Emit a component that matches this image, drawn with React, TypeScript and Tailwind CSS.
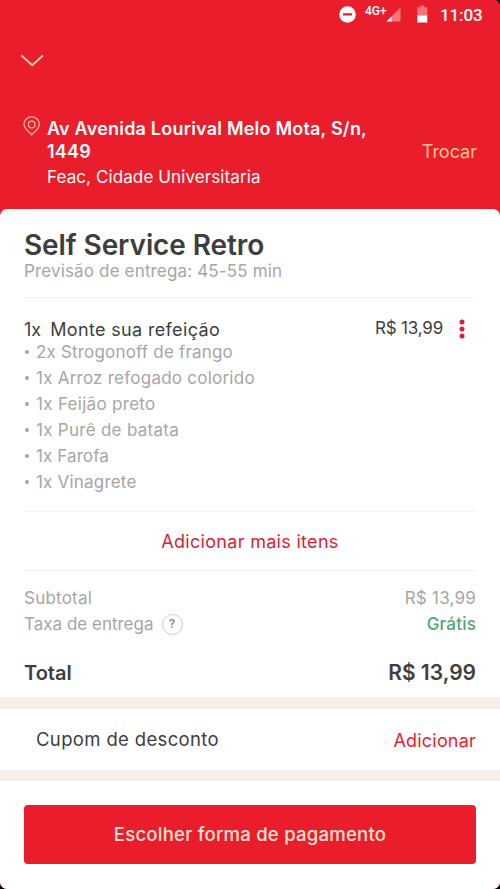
const sideItems = [
  { label: "2x Strogonoff de frango", tracking: "tracking-[0.18px]" },
  { label: "1x Arroz refogado colorido", tracking: "tracking-[0.24px]" },
  { label: "1x Feijão preto", tracking: "tracking-[0.3px]" },
  { label: "1x Purê de batata", tracking: "tracking-[0.28px]" },
  { label: "1x Farofa", tracking: "tracking-[0.1px]" },
  { label: "1x Vinagrete", tracking: "tracking-[0.2px]" },
];

function StatusBar() {
  return (
    <div className="flex h-[30px] items-center pl-[339px] text-white">
      <svg width="18" height="18" viewBox="0 0 18 18" className="shrink-0">
        <circle cx="8.500" cy="8.500" r="8.300" fill="#fff" />
        <rect x="4" y="7.300" width="9" height="2.300" rx="0.400" fill="#ea1d2c" />
      </svg>
      <span className="-mt-[9px] ml-[8px] w-[23px] shrink-0 whitespace-nowrap font-[Roboto] text-[12px] leading-none font-medium">
        4G+
      </span>
      <svg width="15" height="15" viewBox="0 0 15 15" className="-mt-px -ml-0.5 shrink-0">
        <path d="M14.500 0.500V14.500H0.500Z" fill="#f5757e" />
        <path d="M5.500 9.500V14.500H0.500Z" fill="#fff" />
      </svg>
      <svg width="11" height="18" viewBox="0 0 11 18" className="-mt-[2px] ml-[16px] shrink-0">
        <path d="M3.300 0.500H7.300V2.200H10.300V11H0.300V2.200H3.300Z" fill="#f5757e" />
        <path d="M0.300 10.500H10.300V17.500H0.300Z" fill="#fff" />
      </svg>
      <span className="ml-[12px] font-[Roboto] text-[17px] leading-none font-medium tracking-[-0.1px]">11:03</span>
    </div>
  );
}

function Header() {
  return (
    <header className="h-[209px] bg-[#ea1d2c]">
      <StatusBar />
      <svg width="24" height="13" viewBox="0 0 24 13" fill="none" className="mt-[24px] ml-[20px]">
        <path d="M1.500 1.500L12.200 11.200L23 1.500" stroke="#fbd0a4" strokeWidth="1.800" />
      </svg>
      <div className="mt-[49px] flex pr-[23px] pl-[23px]">
        <svg width="18" height="20" viewBox="0 0 18 20" fill="none" stroke="#fbc09a" strokeWidth="1.300" className="shrink-0">
          <path d="M8.700 18.700C7.500 17.400 1 13 1 8.300a7.700 7.500 0 0 1 15.400 0C16.400 13 9.900 17.400 8.700 18.700Z" />
          <circle cx="8.700" cy="8.500" r="3.300" />
        </svg>
        <div className="ml-[6px] flex-1 whitespace-nowrap text-white">
          <p className="mt-px text-[18px] leading-[23px] font-semibold tracking-[0.21px]">
            Av Avenida Lourival Melo Mota, S/n,
            <br />
            1449
          </p>
          <p className="mt-[1px] text-[17px] leading-[26px] tracking-[0.1px]">Feac, Cidade Universitaria</p>
        </div>
        <button className="mt-[24px] h-[24px] text-[18px] leading-[24px] text-[#fcc796]">Trocar</button>
      </div>
    </header>
  );
}

function Divider() {
  return <div className="h-px bg-[#f2f2f2]" />;
}

export default function App() {
  return (
    <div className="h-[889px] w-[500px] overflow-hidden bg-black font-[Inter,sans-serif]">
      <div className="h-full overflow-hidden rounded-tr-[6px] rounded-b-[7px] bg-[#ea1d2c]">
        <Header />
        <main className="h-[680px] rounded-t-[7px] bg-white">
          <section className="h-[488px] px-[24px] pt-[21px]">
            <h1 className="text-[28px] leading-[30px] font-semibold tracking-[-0.1px] whitespace-nowrap text-[#3e3e3e]">
              Self Service Retro
            </h1>
            <p className="mb-[14px] text-[17px] leading-[23px] tracking-[0.15px] text-[#a6a6a5]">
              Previsão de entrega: 45-55 min
            </p>
            <Divider />
            <div className="mt-[20px] flex h-[22px] items-center text-[#3e3e3e]">
              <span className="text-[18px]">1x</span>
              <span className="ml-[9px] flex-1 text-[18px] tracking-[0.35px]">Monte sua refeição</span>
              <span className="text-[17px] tracking-[-0.2px]">R$ 13,99</span>
              <svg width="6" height="20" viewBox="0 0 6 20" fill="#dc1c35" className="mr-[11px] ml-[16px]">
                <circle cx="3" cy="3" r="2.500" />
                <circle cx="3" cy="10" r="2.500" />
                <circle cx="3" cy="17" r="2.500" />
              </svg>
            </div>
            <ul className="-mt-px mb-[16px] text-[17px] leading-[26px] text-[#a6a6a5]">
              {sideItems.map((item) => (
                <li key={item.label} className="flex items-center">
                  <span className="mr-[7px] ml-[1px] size-[4px] rounded-full bg-[#a6a6a5]" />
                  <span className={item.tracking}>{item.label}</span>
                </li>
              ))}
            </ul>
            <Divider />
            <button className="h-[58px] w-full pt-px text-[18px] tracking-[0.3px] text-[#dc1c35]">
              Adicionar mais itens
            </button>
            <Divider />
            <div className="mt-[14px] text-[17px] leading-[26px] text-[#a6a6a5]">
              <div className="flex justify-between tracking-[0.22px]">
                <span>Subtotal</span>
                <span>R$ 13,99</span>
              </div>
              <div className="flex items-center">
                <span>Taxa de entrega</span>
                <span className="ml-[8px] flex size-[21px] items-center justify-center rounded-full border border-[#cccccc] text-[12px] font-semibold text-[#8a8a8a]">
                  ?
                </span>
                <span className="ml-auto font-medium tracking-[0.2px] text-[#50a773]">Grátis</span>
              </div>
            </div>
            <div className="mt-[20px] flex justify-between text-[20px] leading-[32px] font-semibold text-[#3e3e3e]">
              <span>Total</span>
              <span className="text-[21px]">R$ 13,99</span>
            </div>
          </section>
          <div className="h-[12px] bg-[#f5f0eb]" />
          <section className="flex h-[61px] items-center justify-between pt-px pr-[24px] pl-[36px]">
            <span className="text-[18.5px] tracking-[0.35px] text-[#3e3e3e]">Cupom de desconto</span>
            <button className="text-[18px] tracking-[0.2px] text-[#ea1d2c]">Adicionar</button>
          </section>
          <div className="h-[11px] bg-[#f5f0eb]" />
          <div className="px-[24px] pt-[24px]">
            <button className="h-[59px] w-full rounded-[4px] bg-[#ea1d2c] text-[18.5px] font-medium tracking-[0.25px] text-[#fde3d0]">
              Escolher forma de pagamento
            </button>
          </div>
        </main>
      </div>
    </div>
  );
}
